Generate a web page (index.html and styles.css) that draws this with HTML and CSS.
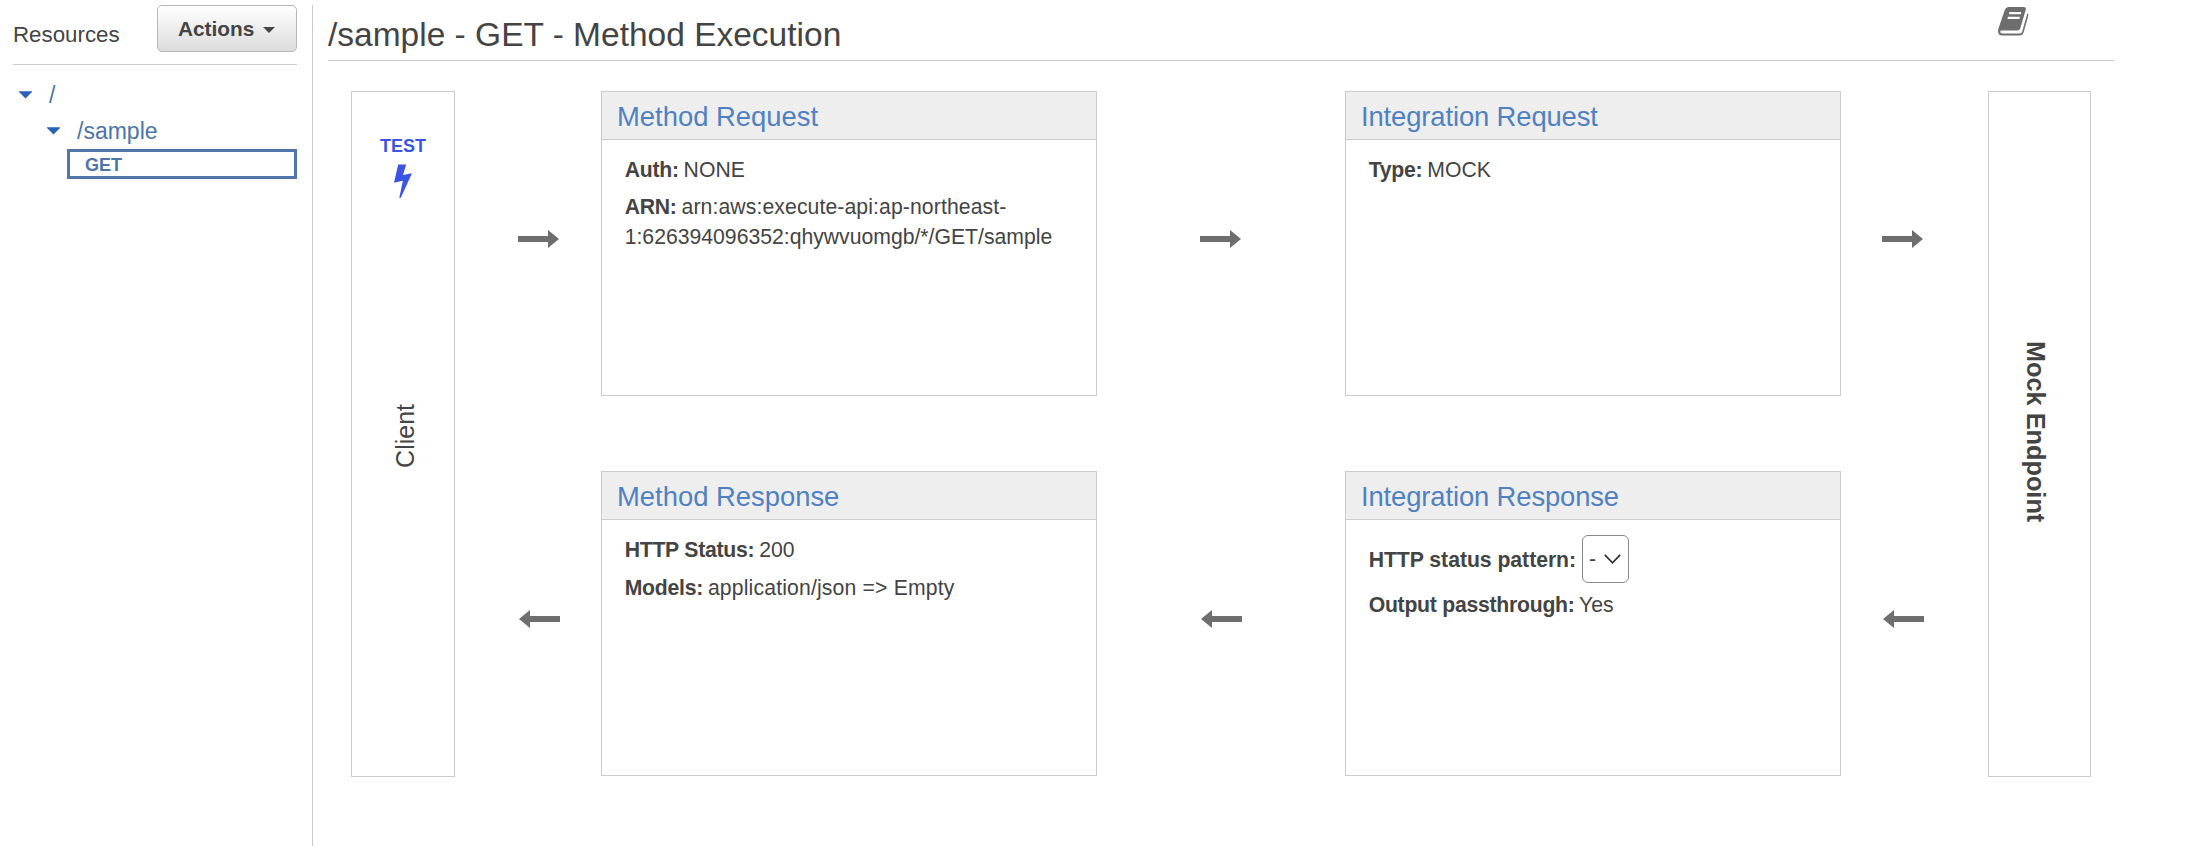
FILE: index.html
```html
<!DOCTYPE html>
<html lang="en">
<head>
<meta charset="utf-8">
<title>Method Execution</title>
<link rel="stylesheet" href="styles.css">
</head>
<body>
<div class="app">
  <aside class="sidebar">
    <div class="sidebar-head">
      <span class="sidebar-title">Resources</span>
      <button class="actions">Actions<svg class="actions-caret" viewBox="0 0 12 6"><path d="M0 0h12L6 6z"/></svg></button>
    </div>
    <ul class="tree">
      <li class="node"><svg class="caret" viewBox="0 0 13 8"><path d="M0 .3h13v.8L6.5 7.6 0 1.1z"/></svg><span>/</span></li>
      <li class="node node-child"><svg class="caret" viewBox="0 0 13 8"><path d="M0 .3h13v.8L6.5 7.6 0 1.1z"/></svg><span>/sample</span></li>
      <li class="method">GET</li>
    </ul>
  </aside>
  <main class="main">
    <header class="main-head">
      <h1 class="title">/sample - GET - Method Execution</h1>
      <svg class="book" viewBox="0 0 31 29"><path fill-rule="evenodd" d="M11 0H25.500Q28.500 0 27.700 3L22.200 21.500Q21.600 23.500 19.500 23.500H4Q2.200 23.500 2.200 24.800 2.200 26.400 4.500 26.400H22Q23.600 26.400 24.200 24.500L29.300 6.500Q30.800 6.500 30.300 8.500L25.600 25.500Q24.600 28.500 21.500 28.500H4.500Q0 28.500 0 24Q0 22.500.8 20.500L6.800 3Q8 0 11 0zM11.500 5L10.900 7.200H22.800L23.400 5zM10 9.700L9.400 11.900H21.400L22 9.700z"/></svg>
    </header>
    <div class="flow">
      <section class="endpoint client">
        <div class="test"><span>TEST</span><svg class="bolt" viewBox="0 0 18 34"><path d="M4.200 .5H12.200L9 11 18 9.200 6.800 33.700H5.300L8.900 16.800 0 18.700z"/></svg></div>
        <span class="vertical up">Client</span>
      </section>
      <div class="lane lane-a">
        <svg class="arrow" viewBox="0 0 41 18"><path d="M0 6h30V0l11 9-11 9v-6H0z"/></svg>
        <svg class="arrow back" viewBox="0 0 41 18"><path d="M41 6H11V0L0 9l11 9v-6h30z"/></svg>
      </div>
      <div class="stack">
        <section class="panel">
          <h2 class="panel-title">Method Request</h2>
          <div class="panel-body">
            <p><b>Auth:</b> NONE</p>
            <p class="arn"><b>ARN:</b> <span class="arn-head">arn:aws:execute-api:ap-northeast-</span><br>1:626394096352:qhywvuomgb/*/GET/sample</p>
          </div>
        </section>
        <section class="panel">
          <h2 class="panel-title">Method Response</h2>
          <div class="panel-body models-body">
            <p><b>HTTP Status:</b> 200</p>
            <p><b>Models:</b> <span class="model">application/json =&gt; Empty</span></p>
          </div>
        </section>
      </div>
      <div class="lane lane-b">
        <svg class="arrow" viewBox="0 0 41 18"><path d="M0 6h30V0l11 9-11 9v-6H0z"/></svg>
        <svg class="arrow back" viewBox="0 0 41 18"><path d="M41 6H11V0L0 9l11 9v-6h30z"/></svg>
      </div>
      <div class="stack">
        <section class="panel">
          <h2 class="panel-title integration">Integration Request</h2>
          <div class="panel-body">
            <p><b>Type:</b> MOCK</p>
          </div>
        </section>
        <section class="panel">
          <h2 class="panel-title integration">Integration Response</h2>
          <div class="panel-body">
            <div class="status-row"><b class="status-label">HTTP status pattern:</b><span class="select">-<svg class="chevron" viewBox="0 0 17 10"><path d="M.8 .8l7.700 8 7.700-8"/></svg></span></div>
            <p class="output"><b>Output passthrough:</b> Yes</p>
          </div>
        </section>
      </div>
      <div class="lane lane-c">
        <svg class="arrow" viewBox="0 0 41 18"><path d="M0 6h30V0l11 9-11 9v-6H0z"/></svg>
        <svg class="arrow back" viewBox="0 0 41 18"><path d="M41 6H11V0L0 9l11 9v-6h30z"/></svg>
      </div>
      <section class="endpoint mock">
        <span class="vertical">Mock Endpoint</span>
      </section>
    </div>
  </main>
</div>
</body>
</html>
```

FILE: styles.css
```css
* { box-sizing: border-box; }
body {
  margin: 0;
  background: #fff;
  color: #444;
  font-family: "Liberation Sans", Arial, sans-serif;
  font-size: 21.2px;
  line-height: 30px;
}
h1, h2, p, ul { margin: 0; padding: 0; font-weight: normal; }
svg { display: block; flex: none; }
.app { display: flex; height: 846px; padding-top: 5px; overflow: hidden; }

.sidebar { width: 312px; padding: 0 15px 0 13px; flex: none; }
.sidebar-head {
  display: flex;
  justify-content: space-between;
  height: 60px;
  border-bottom: 1px solid #ccc;
}
.sidebar-title { font-size: 22.300px; padding-top: 15px; }
.actions {
  display: flex;
  align-items: center;
  width: 140px;
  height: 47px;
  padding: 0 0 0 20px;
  gap: 9px;
  border: 1px solid #b8b8b8;
  border-radius: 5px;
  background: linear-gradient(#fff, #dcdcdc);
  color: #444;
  font: bold 20.800px "Liberation Sans", Arial, sans-serif;
}
.actions-caret { width: 12px; height: 6px; margin-top: 2px; fill: #444; }
.tree { list-style: none; padding-top: 12px; color: #4c74a8; font-size: 23px; }
.node { display: flex; align-items: center; height: 36px; padding-left: 6px; gap: 17px; }
.node-child { padding-left: 34px; }
.caret { width: 13px; height: 8px; fill: #2a62b8; }
.method {
  height: 30px;
  margin-left: 54px;
  padding-left: 15px;
  border: 3px solid #5077aa;
  font-size: 18px;
  font-weight: bold;
  line-height: 26px;
}

.main { flex: 1; border-left: 1px solid #ccc; padding-left: 15px; }
.main-head {
  display: flex;
  justify-content: space-between;
  width: 1786px;
  height: 56px;
  padding-right: 85px;
  border-bottom: 1px solid #ccc;
}
.title { font-size: 33.500px; line-height: 38px; padding-top: 11px; }
.book { width: 31px; height: 29px; margin-top: 2px; fill: #6e6e6e; }

.flow { display: flex; padding: 30px 0 0 23px; }
.endpoint {
  display: flex;
  flex-direction: column;
  align-items: center;
  height: 686px;
  border: 1px solid #ccc;
}
.client { width: 104px; }
.mock { width: 103px; padding-top: 249px; }
.test {
  display: flex;
  flex-direction: column;
  align-items: center;
  height: 312px;
  padding-top: 39px;
  color: #3b54e6;
  font-size: 18px;
  font-weight: bold;
}
.bolt { width: 18px; height: 34px; margin-top: 3px; fill: #3b54e6; }
.vertical { writing-mode: vertical-rl; font-size: 25px; }
.mock .vertical { font-weight: bold; font-size: 25.300px; margin-right: 8px; }
.up { transform: rotate(180deg); margin-left: 4px; }

.lane { display: flex; flex-direction: column; gap: 362px; padding-top: 139px; }
.lane-a { width: 146px; padding-left: 63px; }
.lane-b { width: 248px; padding-left: 103px; }
.lane-c { width: 147px; padding-left: 41px; }
.arrow { width: 41px; height: 18px; fill: #6e6e6e; }
.back { margin-left: 1px; }

.stack { display: grid; grid-template-rows: 305px 305px; gap: 75px; width: 496px; }
.panel { border: 1px solid #ccc; }
.panel-title {
  height: 48px;
  padding: 10px 0 0 15px;
  border-bottom: 1px solid #ccc;
  background: #eee;
  color: #4f81c2;
  font-size: 27.400px;
}
.integration { letter-spacing: -.12px; }
.panel-body { display: grid; gap: 7px; padding: 15px 23px 0 22.700px; }
.panel-body p b { margin-right: -1px; letter-spacing: -.25px; }
.arn-head { letter-spacing: .1px; }
.models-body { gap: 8px; }
.model { letter-spacing: .16px; }
.status-row { display: flex; align-items: center; gap: 6px; height: 48px; }
.status-label { padding-top: 1px; letter-spacing: -.03px; }
.select {
  display: flex;
  align-items: center;
  width: 47px;
  height: 48px;
  padding-left: 6px;
  gap: 8px;
  border: 1px solid #888;
  border-radius: 6px;
}
.chevron { width: 17px; height: 10px; fill: none; stroke: #333; stroke-width: 1.700; }
```
